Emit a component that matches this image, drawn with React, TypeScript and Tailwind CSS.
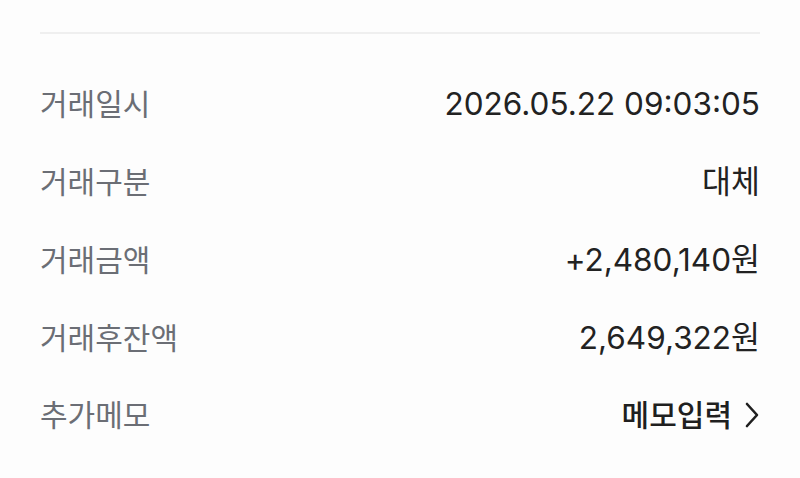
import React from 'react';

const rows: { label: string; value: string }[] = [
  { label: '거래일시', value: '2026.05.22 09:03:05' },
  { label: '거래구분', value: '대체' },
  { label: '거래금액', value: '+2,480,140원' },
  { label: '거래후잔액', value: '2,649,322원' },
];

const font = { fontFamily: 'Inter, "Noto Sans CJK KR", sans-serif' };

export default function App() {
  return (
    <div className="w-[800px] h-[478px] bg-[#fdfdfd] overflow-hidden" style={font}>
      <div className="px-10">
        <div className="h-[34px] border-b-2 border-[#efefef]" />
        <div className="pt-[31px]">
          {rows.map(r => (
            <div key={r.label} className="h-[78px] flex items-center justify-between">
              <span className="text-[30px] text-[#6b6e75]">{r.label}</span>
              <span className="text-[31.5px] text-[#222222]">{r.value}</span>
            </div>
          ))}
          <div className="h-[76px] flex items-center justify-between">
            <span className="text-[30px] text-[#6b6e75]">추가메모</span>
            <button className="flex items-center gap-3 text-[30px] font-medium text-[#1f1f1f]">
              메모입력
              <svg width="16" height="26" viewBox="0 0 16 26" fill="none">
                <path d="M3 2l10 11-10 11" stroke="#1f1f1f" strokeWidth="2.6" strokeLinecap="round" strokeLinejoin="round" />
              </svg>
            </button>
          </div>
        </div>
      </div>
    </div>
  );
}
